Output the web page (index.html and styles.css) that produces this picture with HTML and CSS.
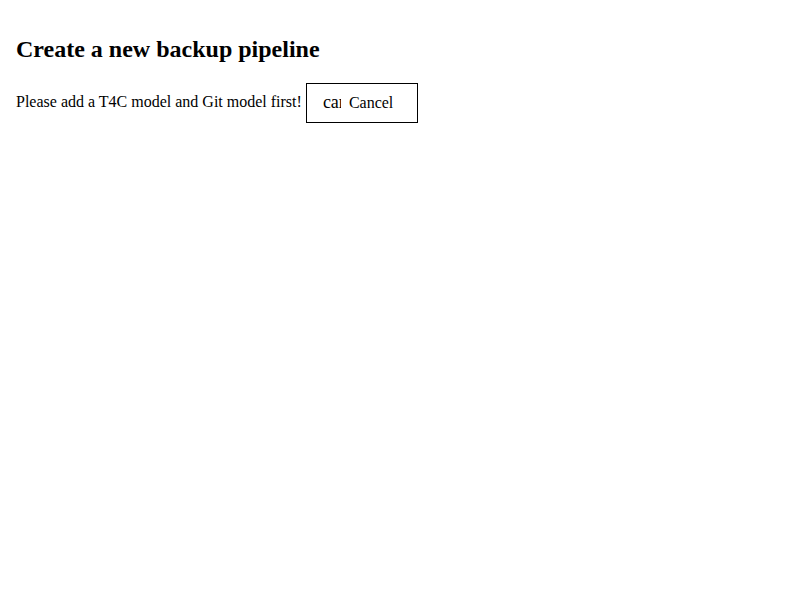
FILE: index.html
```html
<!DOCTYPE html>
<html>
<head>
<meta charset="utf-8">
<link rel="stylesheet" href="styles.css">
</head>
<body>
<div class="dialog">
  <h2 class="title">Create a new backup pipeline</h2>
  <p class="message">Please add a T4C model and Git model first! <button class="cancel-btn"><span class="icon">cancel</span><span class="label">Cancel</span></button></p>
</div>
</body>
</html>
```
FILE: styles.css
```css
body {
  margin: 8px;
  font-family: "Liberation Serif", "Times New Roman", serif;
  color: #000;
  background: #fff;
}
.dialog {
  padding: 8px;
}
.title {
  font-size: 24px;
  font-weight: bold;
  margin: 19.92px 0;
}
.message {
  font-size: 16px;
  margin: 16px 0;
}
.cancel-btn {
  display: inline-flex;
  align-items: center;
  gap: 8px;
  height: 40px;
  padding: 0 24px 0 16px;
  border: 1px solid #000;
  background: #fff;
  font-family: "Liberation Serif", "Times New Roman", serif;
  font-size: 16px;
  color: #000;
  vertical-align: middle;
}
.icon {
  display: inline-block;
  width: 18px;
  overflow: hidden;
  font-size: 18px;
  white-space: nowrap;
}
```
